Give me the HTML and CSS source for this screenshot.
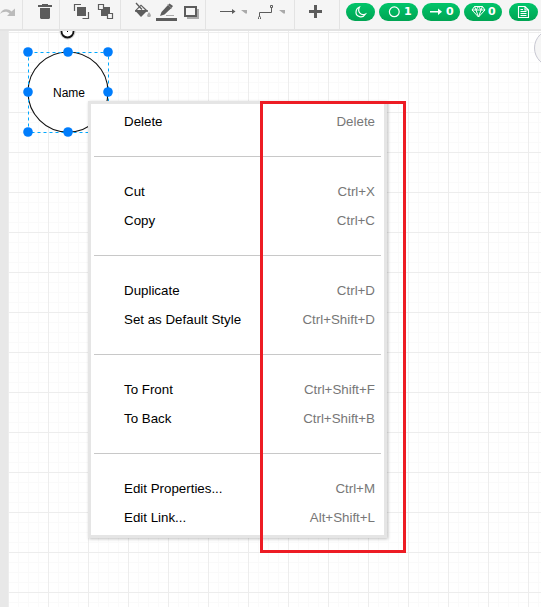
FILE: index.html
```html
<!DOCTYPE html>
<html lang="en">
<head>
<meta charset="utf-8">
<title>Diagram editor</title>
<link rel="stylesheet" href="styles.css">
</head>
<body>
<div class="app">
  <header class="toolbar">
    <div class="group redo"><svg width="22" height="29" viewBox="0 0 22 29"><path d="M0 14C2 8 8 8 11.500 11.500L15 8.500V16H7L9.500 13.500C7 11 3 11.500 0 14Z" fill="#bbb"/></svg></div>
    <div class="group trash"><svg width="36" height="29" viewBox="23 0 36 29"><path d="M38 5H42V4H48V5H52V7H38ZM40 8H50V18L49 19H41L40 18Z" fill="#5c5c5c"/></svg></div>
    <div class="group order"><svg width="60" height="29" viewBox="60 0 60 29"><g fill="#5c5c5c"><path d="M77 7H86V16H77ZM101 7H110V16H101Z"/></g><g fill="none" stroke="#5c5c5c" stroke-width="1.200"><path d="M74.500 11V4.500H81M82.500 18.500H88.500V12"/><path fill="#f5f5f5" d="M98.500 4.500H103.500V9.500H98.500ZM107.500 13.500H112.500V18.500H107.500Z"/></g></svg></div>
    <div class="group paint"><svg width="84" height="29" viewBox="121 0 84 29"><path d="M135 10.500L141 4.500L147.500 10.500L141 17Z" fill="#5c5c5c"/><path d="M141 6L145 10H137Z" fill="#f5f5f5"/><path d="M136 3L142 9.500M135 11H148" stroke="#5c5c5c" stroke-width="1.300"/><path d="M149 12C147 14.500 146 17 149 17S151 14.500 149 12Z" fill="#a7a7a7"/><path d="M160 16L161.500 12L168 5L169.500 3.500L173 6L171.500 8L164.500 14.500Z" fill="#5c5c5c"/><path d="M167.500 4.500L172 8.500" stroke="#999" stroke-width=".8"/><path d="M166 15H174V16H166Z" fill="#aaa"/><path d="M156 18H177V21H156Z" fill="#5c5c5c"/><path d="M187 9H199V19H187Z" fill="#aaa"/><path d="M185 7H196V16H185Z" fill="#f5f5f5" stroke="#5c5c5c" stroke-width="2"/></svg></div>
    <div class="group connect"><svg width="88" height="29" viewBox="206 0 88 29"><g fill="none" stroke="#5c5c5c"><path d="M220 11.500H234"/><path d="M259.500 16V12.500H271.500V8"/><path d="M270.500 5.500H272.500V7.500H270.500Z"/><path d="M258.500 19V17.500L259.500 16L260.500 17.500V19"/></g><path d="M232 9L235.500 11.500L232 14Z" fill="#5c5c5c"/><path d="M241 10H247V13.500H245.500ZM279 10H285V13.500H283.500Z" fill="#aaa"/></svg></div>
    <div class="group add"><svg width="44" height="29" viewBox="295 0 44 29"><path d="M314 5H317V10H322V13H317V18H314V13H309V10H314Z" fill="#5c5c5c"/></svg></div>
    <div class="pills">
      <span class="pill small"><svg width="29" height="18" viewBox="346 3 29 18"><path d="M359.500 7C357 12 361 16 365.500 14C362.500 19 356 16.500 356 12.500C356 9.500 357.500 7.700 359.500 7Z" fill="none" stroke="#fff" stroke-width="1.200"/></svg></span>
      <span class="pill c"><svg width="25" height="18" viewBox="379 3 25 18"><circle cx="394.300" cy="11.800" r="4.900" fill="none" stroke="#fff" stroke-width="1.200"/></svg>1</span>
      <span class="pill"><svg width="24" height="18" viewBox="422 3 24 18"><path d="M430 11H438V8.500L442 11.800L438 15V12.500H430Z" fill="#fff"/></svg>0</span>
      <span class="pill"><svg width="24" height="18" viewBox="464 3 24 18"><path d="M474.500 6.500H482.500L485 10L478.500 17L472 10ZM472 10H485M474.500 6.500L476 10L478.500 17L481 10L482.500 6.500M476 10L478.500 6.500L481 10" fill="none" stroke="#fff"/></svg>0</span>
      <span class="pill small doc"><svg width="29" height="18" viewBox="509 3 29 18"><path d="M518.500 6.500H525L528.500 10V17.500H518.500ZM525 6.500V10H528.500M520.500 11.500H526.500M520.500 13.500H526.500M520.500 15.500H526.500M520.500 9.500H523" fill="none" stroke="#fff" stroke-width="1.100"/></svg></span>
    </div>
  </header>
  <main class="workspace">
    <div class="canvas">
      <svg class="node" width="96" height="111" viewBox="20 31 96 111">
        <circle cx="68" cy="92" r="40" fill="#fff" stroke="#111" stroke-width="1.100"/>
        <rect x="28.500" y="52.500" width="80" height="80" fill="none" stroke="#00a8ff" stroke-dasharray="3 3"/>
        <circle cx="67.500" cy="31.500" r="7.500" fill="#fff" stroke="#ccc"/><circle cx="67.500" cy="31.500" r="6" fill="none" stroke="#111" stroke-width="1.800"/><path d="M67 31h1v1h-1z"/>
        <g fill="#007dfc"><circle cx="28" cy="52" r="4.800"/><circle cx="68" cy="52" r="4.800"/><circle cx="108" cy="52" r="4.800"/><circle cx="28" cy="92" r="4.800"/><circle cx="108" cy="92" r="4.800"/><circle cx="28" cy="132" r="4.800"/><circle cx="68" cy="132" r="4.800"/><circle cx="108" cy="132" r="4.800"/></g>
        <text class="node-label" x="69" y="97">Name</text>
      </svg>
      <div class="round-button"></div>
    </div>
  </main>
  <div class="menu">
    <div class="item"><span>Delete</span><kbd>Delete</kbd></div>
    <div class="divider"></div>
    <div class="item"><span>Cut</span><kbd>Ctrl+X</kbd></div>
    <div class="item"><span>Copy</span><kbd>Ctrl+C</kbd></div>
    <div class="divider"></div>
    <div class="item"><span>Duplicate</span><kbd>Ctrl+D</kbd></div>
    <div class="item"><span>Set as Default Style</span><kbd>Ctrl+Shift+D</kbd></div>
    <div class="divider"></div>
    <div class="item"><span>To Front</span><kbd>Ctrl+Shift+F</kbd></div>
    <div class="item"><span>To Back</span><kbd>Ctrl+Shift+B</kbd></div>
    <div class="divider"></div>
    <div class="item"><span>Edit Properties...</span><kbd>Ctrl+M</kbd></div>
    <div class="item"><span>Edit Link...</span><kbd>Alt+Shift+L</kbd></div>
  </div>
  <div class="highlight"></div>
</div>
</body>
</html>
```
FILE: styles.css
```css
* { box-sizing: border-box; }
body { margin: 0; font-family: "Liberation Sans", Arial, sans-serif; }
.app { position: relative; display: flex; flex-direction: column; width: 541px; height: 607px; overflow: hidden; }
.toolbar { display: flex; height: 29px; flex: none; background: #f5f5f5; }
.group { flex: none; border-right: 1px solid #e3e3e3; }
.group svg, .pill svg { display: block; flex: none; }
.redo { width: 23px; }
.trash { width: 37px; }
.order { width: 61px; }
.paint { width: 85px; }
.connect { width: 89px; }
.add { width: 45px; }
.pills { display: flex; gap: 4px; padding: 3px 0 0 6px; }
.pill { display: flex; flex: none; width: 38px; height: 18px; border-radius: 9px; background: linear-gradient(#00c56a, #00a453); color: #fff; font: bold 11px/18px "DejaVu Sans", sans-serif; }
.pill.small { width: 29px; }
.pill.c { width: 39px; }
.pill.doc { margin-left: 3px; }
.workspace { flex: 1; display: flex; padding-left: 8px; border-top: 2px solid #e3e3e3; background: #e8e8e8; }
.canvas {
  position: relative; flex: 1; overflow: hidden; background-color: #fff;
  background-image: linear-gradient(90deg, #ededed 1px, transparent 1px), linear-gradient(#ededed 1px, transparent 1px), linear-gradient(90deg, #fafafa 1px, transparent 1px), linear-gradient(#fafafa 1px, transparent 1px);
  background-size: 40px 40px, 40px 40px, 10px 10px, 10px 10px;
  background-position: 0 1px;
}
.node { position: absolute; left: 12px; top: 0; }
.node-label { font-size: 12px; text-anchor: middle; fill: #000; }
.round-button { position: absolute; left: 526px; top: -2px; width: 38px; height: 38px; border: 1px solid #c8c8d2; border-radius: 50%; background: #f5f5f5; }
.menu { position: absolute; left: 88px; top: 101px; width: 299px; height: 437px; padding: 3px; border: 3px solid #e5e5e5; background: #fff; box-shadow: 1px 1px 3px rgba(0, 0, 0, .25); }
.item { display: flex; justify-content: space-between; height: 29px; padding: 0 6px 0 30px; font-size: 13.333px; line-height: 29px; color: #000; white-space: nowrap; }
.item kbd { font: inherit; color: #777; }
.divider { height: 1px; margin: 20px 0; background: #c8c8c8; }
.highlight { position: absolute; left: 260px; top: 101px; width: 146px; height: 452px; border: 3px solid #ed1c24; }
```
